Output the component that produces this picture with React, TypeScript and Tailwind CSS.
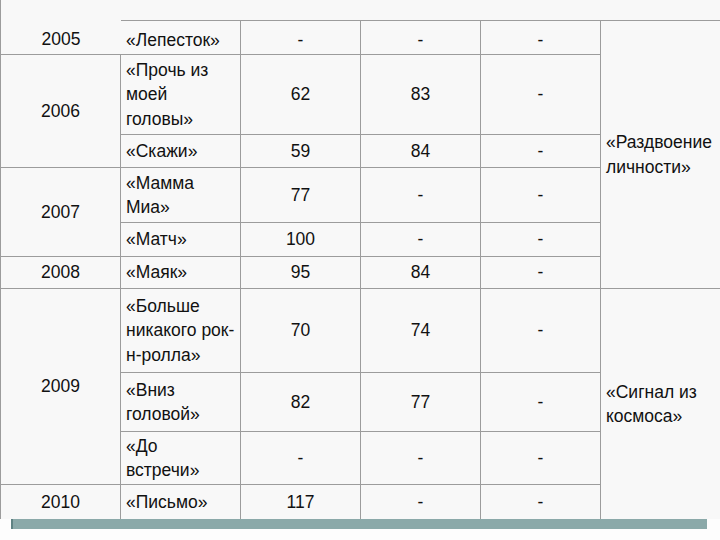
import React from 'react';

const font = { fontFamily: '"Liberation Sans", Arial, sans-serif' };

const line = 'border-[#9c9c9c]';

const App: React.FC = () => {
  return (
    <div className="w-[720px] h-[540px] bg-[#fdfdfd] overflow-hidden text-[17.5px] leading-[24.5px] text-[#111]" style={font}>
      <div className={`bg-[#f8f8f8] border-l ${line}`}>
        <div className="h-[20px]" />
        <div className="grid grid-cols-[120px_120px_120px_120px_120px_120px] grid-rows-[35px_80px_33px_55px_34px_32px_84px_59px_53px_34px]">
          {/* 2005 */}
          <div className={`col-start-1 row-start-1 -mt-[20px] pt-[25px] flex items-center justify-center border-b ${line}`}>2005</div>
          <div className={`col-start-2 row-start-1 pt-[5px] pl-[5px] flex items-center border-t border-b border-r ${line}`}>«Лепесток»</div>
          <div className={`col-start-3 row-start-1 pt-[5px] flex items-center justify-center border-t border-b border-r ${line}`}>-</div>
          <div className={`col-start-4 row-start-1 pt-[5px] flex items-center justify-center border-t border-b border-r ${line}`}>-</div>
          <div className={`col-start-5 row-start-1 pt-[5px] flex items-center justify-center border-t border-b border-r ${line}`}>-</div>
          <div className={`col-start-6 row-start-1 row-span-6 pl-[5px] flex items-center border-t border-b ${line}`}>
            <span>«Раздвоение<br />личности»</span>
          </div>

          {/* 2006 */}
          <div className={`col-start-1 row-start-2 row-span-2 flex items-center justify-center border-b border-r ${line}`}>2006</div>
          <div className={`col-start-2 row-start-2 pl-[5px] flex items-center border-b border-r ${line}`}>
            <span>«Прочь из<br />моей<br />головы»</span>
          </div>
          <div className={`col-start-3 row-start-2 flex items-center justify-center border-b border-r ${line}`}>62</div>
          <div className={`col-start-4 row-start-2 flex items-center justify-center border-b border-r ${line}`}>83</div>
          <div className={`col-start-5 row-start-2 flex items-center justify-center border-b border-r ${line}`}>-</div>

          <div className={`col-start-2 row-start-3 pl-[5px] flex items-center border-b border-r ${line}`}>«Скажи»</div>
          <div className={`col-start-3 row-start-3 flex items-center justify-center border-b border-r ${line}`}>59</div>
          <div className={`col-start-4 row-start-3 flex items-center justify-center border-b border-r ${line}`}>84</div>
          <div className={`col-start-5 row-start-3 flex items-center justify-center border-b border-r ${line}`}>-</div>

          {/* 2007 */}
          <div className={`col-start-1 row-start-4 row-span-2 flex items-center justify-center border-b border-r ${line}`}>2007</div>
          <div className={`col-start-2 row-start-4 pl-[5px] flex items-center border-b border-r ${line}`}>
            <span>«Мамма<br />Миа»</span>
          </div>
          <div className={`col-start-3 row-start-4 flex items-center justify-center border-b border-r ${line}`}>77</div>
          <div className={`col-start-4 row-start-4 flex items-center justify-center border-b border-r ${line}`}>-</div>
          <div className={`col-start-5 row-start-4 flex items-center justify-center border-b border-r ${line}`}>-</div>

          <div className={`col-start-2 row-start-5 pl-[5px] flex items-center border-b border-r ${line}`}>«Матч»</div>
          <div className={`col-start-3 row-start-5 flex items-center justify-center border-b border-r ${line}`}>100</div>
          <div className={`col-start-4 row-start-5 flex items-center justify-center border-b border-r ${line}`}>-</div>
          <div className={`col-start-5 row-start-5 flex items-center justify-center border-b border-r ${line}`}>-</div>

          {/* 2008 */}
          <div className={`col-start-1 row-start-6 flex items-center justify-center border-b border-r ${line}`}>2008</div>
          <div className={`col-start-2 row-start-6 pl-[5px] flex items-center border-b border-r ${line}`}>«Маяк»</div>
          <div className={`col-start-3 row-start-6 flex items-center justify-center border-b border-r ${line}`}>95</div>
          <div className={`col-start-4 row-start-6 flex items-center justify-center border-b border-r ${line}`}>84</div>
          <div className={`col-start-5 row-start-6 flex items-center justify-center border-b border-r ${line}`}>-</div>

          {/* 2009 */}
          <div className={`col-start-1 row-start-7 row-span-3 flex items-center justify-center border-b border-r ${line}`}>2009</div>
          <div className={`col-start-2 row-start-7 pl-[5px] flex items-center border-b border-r ${line}`}>
            <span>«Больше<br />никакого рок-<br />н-ролла»</span>
          </div>
          <div className={`col-start-3 row-start-7 flex items-center justify-center border-b border-r ${line}`}>70</div>
          <div className={`col-start-4 row-start-7 flex items-center justify-center border-b border-r ${line}`}>74</div>
          <div className={`col-start-5 row-start-7 flex items-center justify-center border-b border-r ${line}`}>-</div>
          <div className="col-start-6 row-start-7 row-span-4 pl-[5px] flex items-center">
            <span>«Сигнал из<br />космоса»</span>
          </div>

          <div className={`col-start-2 row-start-8 pl-[5px] flex items-center border-b border-r ${line}`}>
            <span>«Вниз<br />головой»</span>
          </div>
          <div className={`col-start-3 row-start-8 flex items-center justify-center border-b border-r ${line}`}>82</div>
          <div className={`col-start-4 row-start-8 flex items-center justify-center border-b border-r ${line}`}>77</div>
          <div className={`col-start-5 row-start-8 flex items-center justify-center border-b border-r ${line}`}>-</div>

          <div className={`col-start-2 row-start-9 pl-[5px] flex items-center border-b border-r ${line}`}>
            <span>«До<br />встречи»</span>
          </div>
          <div className={`col-start-3 row-start-9 flex items-center justify-center border-b border-r ${line}`}>-</div>
          <div className={`col-start-4 row-start-9 flex items-center justify-center border-b border-r ${line}`}>-</div>
          <div className={`col-start-5 row-start-9 flex items-center justify-center border-b border-r ${line}`}>-</div>

          {/* 2010 */}
          <div className={`col-start-1 row-start-10 flex items-center justify-center border-r ${line}`}>2010</div>
          <div className={`col-start-2 row-start-10 pl-[5px] flex items-center border-r ${line}`}>«Письмо»</div>
          <div className={`col-start-3 row-start-10 flex items-center justify-center border-r ${line}`}>117</div>
          <div className={`col-start-4 row-start-10 flex items-center justify-center border-r ${line}`}>-</div>
          <div className={`col-start-5 row-start-10 flex items-center justify-center border-r ${line}`}>-</div>
        </div>
      </div>
      <div className="ml-[11px] w-[696px] h-[10px] bg-[#8ba9a9] border-l-2 border-[#5f8283]" />
    </div>
  );
};

export default App;
